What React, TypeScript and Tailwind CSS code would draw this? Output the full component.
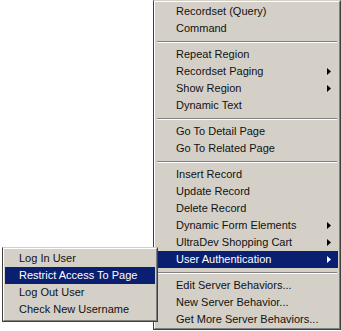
import React from 'react';

type Item = { label: string; sub?: boolean; active?: boolean } | 'sep';

const mainItems: Item[] = [
  { label: 'Recordset (Query)' },
  { label: 'Command' },
  'sep',
  { label: 'Repeat Region' },
  { label: 'Recordset Paging', sub: true },
  { label: 'Show Region', sub: true },
  { label: 'Dynamic Text' },
  'sep',
  { label: 'Go To Detail Page' },
  { label: 'Go To Related Page' },
  'sep',
  { label: 'Insert Record' },
  { label: 'Update Record' },
  { label: 'Delete Record' },
  { label: 'Dynamic Form Elements', sub: true },
  { label: 'UltraDev Shopping Cart', sub: true },
  { label: 'User Authentication', sub: true, active: true },
  'sep',
  { label: 'Edit Server Behaviors...' },
  { label: 'New Server Behavior...' },
  { label: 'Get More Server Behaviors...' },
];

const authItems: Item[] = [
  { label: 'Log In User' },
  { label: 'Restrict Access To Page', active: true },
  { label: 'Log Out User' },
  { label: 'Check New Username' },
];

function Arrow({ active }: { active?: boolean }) {
  return (
    <svg width="4" height="7" viewBox="0 0 4 7" className="shrink-0">
      <path d="M0 0 L4 3.5 L0 7 Z" fill={active ? '#ffffff' : '#000000'} />
    </svg>
  );
}

function MenuRows({ items, indent }: { items: Item[]; indent: string }) {
  return (
    <>
      {items.map((it, i) =>
        it === 'sep' ? (
          <div key={i} className="h-[9px] flex flex-col justify-center px-[1px]">
            <div className="h-px bg-[#808080]" />
            <div className="h-px bg-white" />
          </div>
        ) : (
          <div
            key={i}
            className={`h-[17px] flex items-center ${indent} pr-[7px] ${
              it.active ? 'bg-[#0a1f70] text-white' : 'text-[#111]'
            }`}
          >
            <span className="flex-1 whitespace-nowrap">{it.label}</span>
            {it.sub && <Arrow active={it.active} />}
          </div>
        )
      )}
    </>
  );
}

export default function App() {
  return (
    <div className="relative w-[341px] h-[331px] bg-white overflow-hidden font-['Liberation_Sans',sans-serif] text-[11px] leading-none">
      <div className="absolute left-[153px] top-0 w-[188px] h-[330px] bg-[#d4d0c8] border border-t-[#d4d0c8] border-l-[#404040] border-r-[#404040] border-b-[#404040]">
        <div className="h-full border border-t-white border-l-white border-r-[#808080] border-b-[#808080] p-[1px]">
          <MenuRows items={mainItems} indent="pl-[20px]" />
        </div>
      </div>
      <div className="absolute left-[2px] top-[247px] w-[156px] h-[75px] bg-[#d4d0c8] border border-t-[#d4d0c8] border-l-[#404040] border-r-[#404040] border-b-[#404040]">
        <div className="h-full border border-t-white border-l-white border-r-[#808080] border-b-[#808080] p-[1px]">
          <MenuRows items={authItems} indent="pl-[14px]" />
        </div>
      </div>
    </div>
  );
}
